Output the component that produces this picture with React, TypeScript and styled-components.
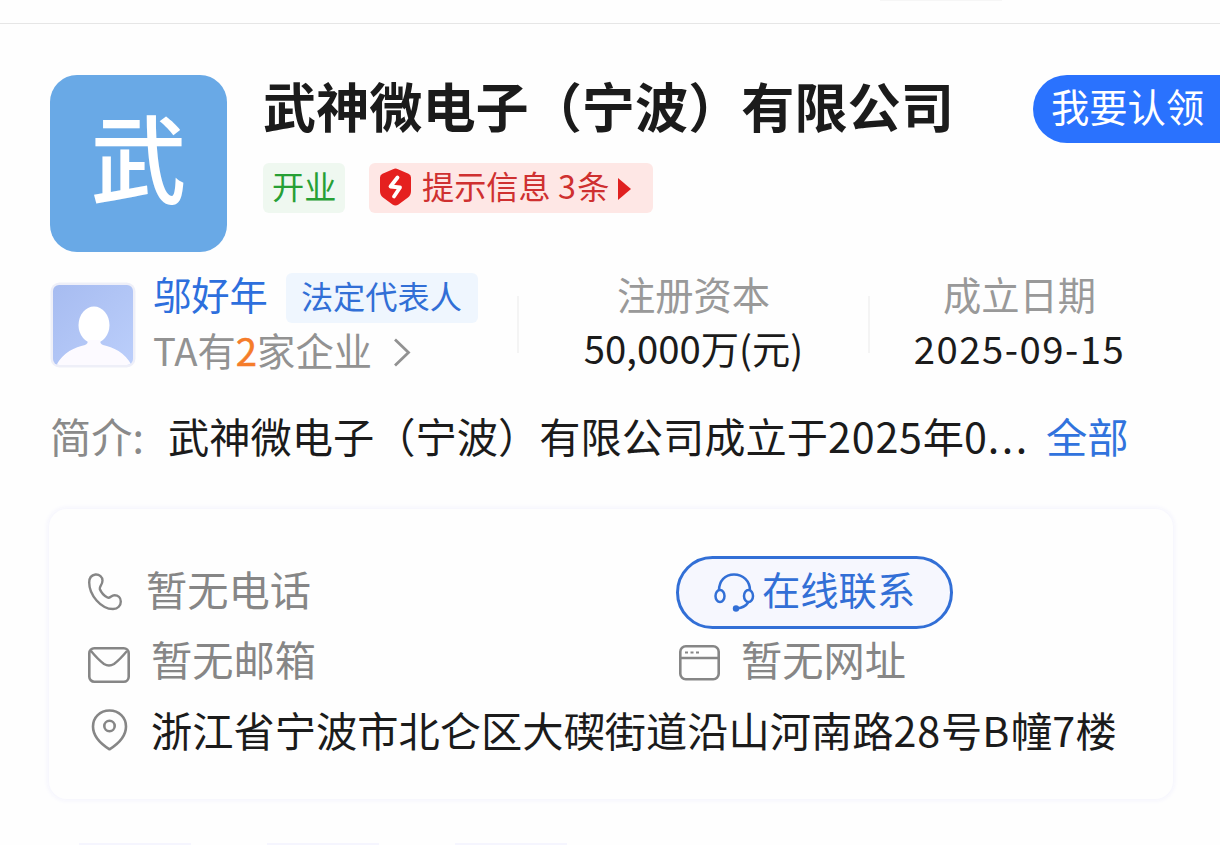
import React from 'react';
import styled, { createGlobalStyle } from 'styled-components';

const GlobalStyle = createGlobalStyle`
  * {
    box-sizing: border-box;
  }
  body {
    margin: 0;
    background: #fefefe;
    font-family: "Noto Sans CJK SC", sans-serif;
    color: #1b1b1b;
  }
`;

//styled components
const Page = styled.div`
  width: 1220px;
  height: 845px;
  overflow: hidden;
  background: #fefefe;
  display: flex;
  flex-direction: column;
  white-space: nowrap;
`;
const TopStrip = styled.div`
  height: 24px;
  flex: none;
  border-bottom: 1px solid #e6e6e6;
  padding-left: 880px;
`;
const TopTab = styled.div`
  width: 122px;
  height: 1px;
  background: #f6f6f6;
`;
const Header = styled.div`
  display: flex;
  padding: 51px 0 0 50px;
  height: 228px;
  flex: none;
`;
const Logo = styled.div`
  width: 177px;
  height: 177px;
  border-radius: 27px;
  background: #69a9e6;
  color: #fff;
  font-size: 96px;
  font-weight: 500;
  line-height: 159px;
  text-align: center;
`;
const HeaderInfo = styled.div`
  margin-left: 36px;
`;
const Title = styled.h1`
  margin: 0;
  font-size: 53.15px;
  font-weight: 700;
  line-height: 60px;
`;
const Tags = styled.div`
  display: flex;
  gap: 24px;
  margin-top: 28px;
`;
const Tag = styled.div<{ $color: string; $bg: string; $width: number; $pad: number }>`
  display: flex;
  width: ${(p) => p.$width}px;
  height: 50px;
  padding-left: ${(p) => p.$pad}px;
  border-radius: 6px;
  font-size: 32.2px;
  line-height: 45px;
  color: ${(p) => p.$color};
  background: ${(p) => p.$bg};
`;
const TagText = styled.span`
  margin: 0 6px 0 11px;
  width: 190px;
`;
const ClaimButton = styled.div`
  margin-left: auto;
  width: 187px;
  height: 68px;
  padding-left: 18px;
  border-radius: 34px 0 0 34px;
  background: #2a72fe;
  color: #fff;
  font-size: 38.3px;
  line-height: 62px;
`;
const Summary = styled.div`
  display: flex;
  flex: none;
  height: 154px;
  padding: 21px 0 0 50px;
`;
const Person = styled.div`
  margin-left: 17px;
  width: 364px;
`;
const PersonLine = styled.div<{ $gap?: number }>`
  display: flex;
  height: 50px;
  gap: ${(p) => p.$gap || 0}px;
  font-size: 38.3px;
  line-height: 42px;
`;
const Name = styled.span`
  color: #2d6fdd;
`;
const Companies = styled.span`
  width: 219px;
  color: #929292;
  margin-top: 6px;
`;
const Count = styled.span`
  color: #f57c2a;
  -webkit-text-stroke: 0.5px #f57c2a;
`;
const Divider = styled.div`
  width: 2px;
  height: 57px;
  margin-top: 23px;
  background: #f4f4f4;
`;
const Stat = styled.div<{ $width: number }>`
  width: ${(p) => p.$width}px;
  text-align: center;
  font-size: 38.3px;
`;
const StatLabel = styled.div`
  line-height: 42px;
  color: #999;
`;
const StatValue = styled.div<{ $spacing?: number }>`
  margin-top: 12px;
  line-height: 42px;
  letter-spacing: ${(p) => p.$spacing || 0}px;
`;
const Intro = styled.div`
  display: flex;
  flex: none;
  height: 103px;
  padding-left: 50px;
  font-size: 41.25px;
  line-height: 58px;
`;
const IntroLabel = styled.span`
  width: 118px;
  color: #8a8a8a;
`;
const IntroText = styled.span`
  width: 878px;
`;
const Num = styled.span<{ $spacing: number }>`
  letter-spacing: ${(p) => p.$spacing}px;
`;
const More = styled.span`
  color: #3173dd;
`;
const Card = styled.div`
  flex: none;
  width: 1124px;
  height: 290px;
  margin-left: 49px;
  padding: 47px 0 0 39px;
  border-radius: 18px;
  background: #fefefe;
  box-shadow: 0 0 4px 2px #f5f5fd;
`;
const CardRow = styled.div<{ $height: number; $line: number }>`
  display: flex;
  height: ${(p) => p.$height}px;
  font-size: 41.25px;
  line-height: ${(p) => p.$line}px;
  color: #868686;
`;
const Cell = styled.div<{ $width?: number; $dark?: boolean }>`
  display: flex;
  width: ${(p) => (p.$width ? p.$width + 'px' : 'auto')};
  color: ${(p) => (p.$dark ? '#1b1b1b' : 'inherit')};
`;
const Icon = styled.svg<{ $top?: number; $right?: number }>`
  display: block;
  flex: none;
  fill: none;
  margin-top: ${(p) => p.$top || 0}px;
  margin-right: ${(p) => p.$right || 0}px;
`;
const ContactButton = styled.div`
  display: flex;
  width: 277px;
  height: 73px;
  padding-left: 35px;
  border: 3px solid #326fd6;
  border-radius: 37px;
  background: #f6f7fe;
  color: #326fd6;
  font-size: 38.3px;
  line-height: 60px;
`;
const BottomTabs = styled.div`
  display: flex;
  flex: none;
  margin-top: 44px;
  padding-left: 79px;
  gap: 76px;
`;
const BottomTab = styled.div`
  width: 112px;
  height: 2px;
  background: #f5f5fe;
`;

const App: React.FC = () => {
  return (
    <Page>
      <GlobalStyle />
      <TopStrip>
        <TopTab />
      </TopStrip>

      <Header>
        <Logo>武</Logo>
        <HeaderInfo>
          <Title>武神微电子（宁波）有限公司</Title>
          <Tags>
            <Tag $color="#27a035" $bg="#eff8f0" $width={82} $pad={9}>开业</Tag>
            <Tag $color="#cf3030" $bg="#fee7e5" $width={284} $pad={11}>
              <Icon $top={5} width="31" height="38" viewBox="0 0 31 38">
                <path d="M13 1.2Q15.5 0 18 1.2L28.5 5.8Q31 7 31 9.5V23Q31 27 28 29.5L18.5 36.5Q15.5 38.5 12.5 36.5L3 29.5Q0 27 0 23V9.5Q0 7 2.5 5.8Z" fill="#e5201f" />
                <path d="M17.5 9.5L10.5 18.5L20 19.5L14 28.5" stroke="#fff" strokeWidth="3.8" strokeLinecap="round" strokeLinejoin="round" />
              </Icon>
              <TagText>提示信息 <Num $spacing={1.5}>3</Num>条</TagText>
              <Icon $top={15} width="13" height="22" viewBox="0 0 13 22">
                <path d="M0 0L13 11L0 22Z" fill="#e02020" />
              </Icon>
            </Tag>
          </Tags>
        </HeaderInfo>
        <ClaimButton>我要认领</ClaimButton>
      </Header>

      <Summary>
        <Icon $top={9} width="86" height="86" viewBox="0 0 86 86">
          <defs>
            <linearGradient id="avatarBg" x1="0" y1="0" x2="1" y2="1">
              <stop offset="0" stopColor="#a6bbf0" />
              <stop offset="1" stopColor="#bccffb" />
            </linearGradient>
            <clipPath id="avatarClip">
              <rect x="3" y="3" width="80" height="80" rx="6" />
            </clipPath>
          </defs>
          <rect x="0.5" y="0.5" width="85" height="85" rx="9" fill="#eeeff8" />
          <g clipPath="url(#avatarClip)">
            <rect width="86" height="86" fill="url(#avatarBg)" />
            <ellipse cx="44" cy="43" rx="15.5" ry="18.5" fill="#fff" />
            <path d="M6 84C12 71 25 65 35 63Q38 62 38 58H50Q50 62 53 63C63 65 76 71 82 84Z" fill="#fcfaff" />
          </g>
        </Icon>
        <Person>
          <PersonLine $gap={18}>
            <Name>邬好年</Name>
            <Tag $color="#326fd6" $bg="#eff6fe" $width={192} $pad={15}>法定代表人</Tag>
          </PersonLine>
          <PersonLine $gap={21}>
            <Companies>TA有<Count>2</Count>家企业</Companies>
            <Icon $top={15} width="18" height="29" viewBox="0 0 18 29">
              <path d="M2 1.5L15.5 14.5L2 27.5" stroke="#929292" strokeWidth="2.8" />
            </Icon>
          </PersonLine>
        </Person>
        <Divider />
        <Stat $width={349}>
          <StatLabel>注册资本</StatLabel>
          <StatValue>50,000万(元)</StatValue>
        </Stat>
        <Divider />
        <Stat $width={299}>
          <StatLabel>成立日期</StatLabel>
          <StatValue $spacing={1.5}>2025-09-15</StatValue>
        </Stat>
      </Summary>

      <Intro>
        <IntroLabel>简介:</IntroLabel>
        <IntroText>
          武神微电子（宁波）有限公司成立于<Num $spacing={0.8}>2025</Num>年<Num $spacing={0.8}>0</Num><Num $spacing={2.6}>...</Num>
        </IntroText>
        <More>全部</More>
      </Intro>

      <Card>
        <CardRow $height={73} $line={64}>
          <Cell $width={588}>
            <Icon $top={17} $right={23} width="35" height="38" viewBox="0 0 35 38">
              <path d="M7.5 1.5C3.5 2 1.2 5 1.2 9.5C1.2 22 13 36 25 36C30 36 32.8 32.5 32.8 28.5C32.8 24.5 30 22.3 26.5 22.3C23 22.3 22 25.8 19.5 24.5C16.500 23 13 19 11.800 16C11.200 13.500 14.500 12 14.500 7.500C14.500 4 11.500 1.200 7.500 1.500Z" stroke="#868686" strokeWidth="2.4" strokeLinejoin="round" />
            </Icon>
            暂无电话
          </Cell>
          <ContactButton>
            <Icon $top={14} $right={7} width="41" height="40" viewBox="0 0 41 40">
              <g stroke="#326fd6" strokeWidth="2.5">
                <path d="M5 17.5C5 8 11 1.5 20 1.5S36 8 36 17.5" />
                <ellipse cx="6" cy="23" rx="4.5" ry="6" />
                <ellipse cx="34.5" cy="23" rx="4.5" ry="6" />
                <path d="M34.5 29C32 33 28 35 23 35.5" />
              </g>
              <circle cx="22" cy="35.5" r="3.2" fill="#326fd6" />
            </Icon>
            在线联系
          </ContactButton>
        </CardRow>
        <CardRow $height={65} $line={58}>
          <Cell $width={591}>
            <Icon $top={18} $right={21} width="42" height="36" viewBox="0 0 42 36">
              <rect x="1.3" y="1.3" width="39.4" height="33.4" rx="5" stroke="#868686" strokeWidth="2.6" />
              <path d="M3 4C8 10 12 14 16 17Q21 20 26 17C30 14 34 10 39 4" stroke="#868686" strokeWidth="2.4" />
            </Icon>
            暂无邮箱
          </Cell>
          <Cell>
            <Icon $top={16} $right={21} width="41" height="36" viewBox="0 0 41 36">
              <rect x="1.3" y="1.3" width="38.4" height="32.9" rx="5.5" stroke="#868686" strokeWidth="2.6" />
              <path d="M1 13H40" stroke="#868686" strokeWidth="2.4" />
              <path d="M6 7.5H9M11.5 7.5H14.5M17 7.5H20" stroke="#868686" strokeWidth="2" />
            </Icon>
            暂无网址
          </Cell>
        </CardRow>
        <CardRow $height={72} $line={70}>
          <Cell $dark>
            <Icon $top={15} $right={19} width="44" height="42" viewBox="0 0 44 42">
              <path d="M21.5 1.5C12 1.5 5 8.5 5 17.5C5 27 13 35 21.5 40.3C30 35 38 27 38 17.5C38 8.5 31 1.5 21.5 1.5Z" stroke="#868686" strokeWidth="2.6" strokeLinejoin="round" />
              <circle cx="21.5" cy="17" r="5.2" stroke="#868686" strokeWidth="2.6" />
            </Icon>
            <span>
              浙江省宁波市北仑区大碶街道沿山河南路<Num $spacing={0.9}>28</Num>号<Num $spacing={1.5}>B</Num>幢<Num $spacing={0.3}>7</Num>楼
            </span>
          </Cell>
        </CardRow>
      </Card>

      <BottomTabs>
        <BottomTab />
        <BottomTab />
        <BottomTab />
      </BottomTabs>
    </Page>
  );
};

export default App;
